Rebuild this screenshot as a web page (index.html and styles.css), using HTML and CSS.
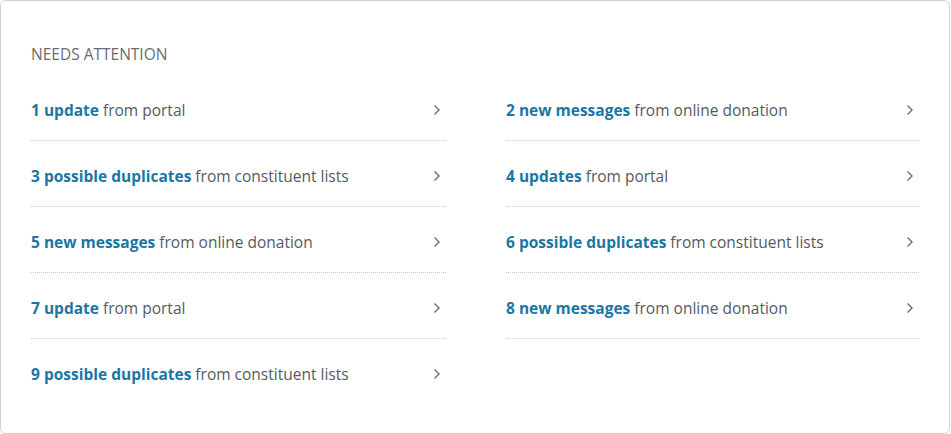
FILE: index.html
```html
<!DOCTYPE html>
<html>
<head>
<meta charset="utf-8">
<link rel="stylesheet" href="styles.css">
</head>
<body>
<div class="card">
  <h2 class="title">NEEDS ATTENTION</h2>
  <div class="grid">
    <a class="item"><span class="txt"><b>1 update</b> from portal</span><svg class="chev" viewBox="0 0 8 12"><path d="M1.5 1.5 L6 6 L1.5 10.5"/></svg></a>
    <a class="item"><span class="txt"><b>2 new messages</b> from online donation</span><svg class="chev" viewBox="0 0 8 12"><path d="M1.5 1.5 L6 6 L1.5 10.5"/></svg></a>
    <a class="item"><span class="txt"><b>3 possible duplicates</b> from constituent lists</span><svg class="chev" viewBox="0 0 8 12"><path d="M1.5 1.5 L6 6 L1.5 10.5"/></svg></a>
    <a class="item"><span class="txt"><b>4 updates</b> from portal</span><svg class="chev" viewBox="0 0 8 12"><path d="M1.5 1.5 L6 6 L1.5 10.5"/></svg></a>
    <a class="item"><span class="txt"><b>5 new messages</b> from online donation</span><svg class="chev" viewBox="0 0 8 12"><path d="M1.5 1.5 L6 6 L1.5 10.5"/></svg></a>
    <a class="item"><span class="txt"><b>6 possible duplicates</b> from constituent lists</span><svg class="chev" viewBox="0 0 8 12"><path d="M1.5 1.5 L6 6 L1.5 10.5"/></svg></a>
    <a class="item"><span class="txt"><b>7 update</b> from portal</span><svg class="chev" viewBox="0 0 8 12"><path d="M1.5 1.5 L6 6 L1.5 10.5"/></svg></a>
    <a class="item"><span class="txt"><b>8 new messages</b> from online donation</span><svg class="chev" viewBox="0 0 8 12"><path d="M1.5 1.5 L6 6 L1.5 10.5"/></svg></a>
    <a class="item last"><span class="txt"><b>9 possible duplicates</b> from constituent lists</span><svg class="chev" viewBox="0 0 8 12"><path d="M1.5 1.5 L6 6 L1.5 10.5"/></svg></a>
  </div>
</div>
</body>
</html>
```
FILE: styles.css
```css
html, body {
  margin: 0;
  padding: 0;
  background: #fff;
}
body {
  font-family: "Open Sans", "Liberation Sans", sans-serif;
  font-size: 15.5px;
  line-height: 20px;
  color: #555a61;
}
.card {
  box-sizing: border-box;
  width: 950px;
  height: 434px;
  border: 1px solid #d1d1d1;
  border-radius: 6px;
  padding: 43px 29px 0 30px;
}
.title {
  margin: 0 0 11px;
  font-size: 15.5px;
  font-weight: 400;
  line-height: 20px;
  color: #686c73;
}
.grid {
  display: grid;
  grid-template-columns: 415px 413px;
  column-gap: 60px;
}
.item {
  display: flex;
  align-items: center;
  justify-content: space-between;
  padding: 25px 5px 20px 0;
  border-bottom: 1px dotted #c6c6c6;
  color: #555a61;
  text-decoration: none;
}
.item.last {
  border-bottom: none;
}
.txt b {
  font-weight: 700;
  color: #1c76a4;
}
.chev {
  width: 8px;
  height: 12px;
  fill: none;
  stroke: #686c73;
  stroke-width: 1.4;
}
```
